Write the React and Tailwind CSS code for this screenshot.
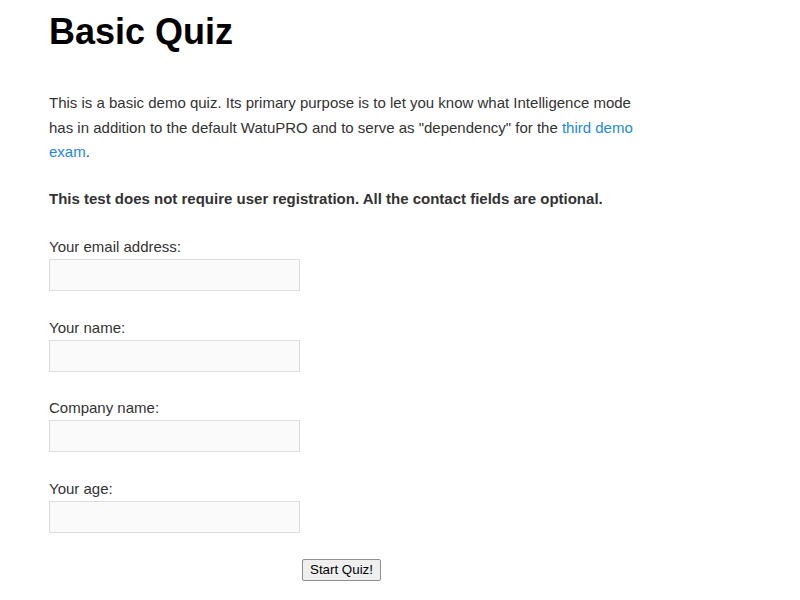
const fields = ["Your email address:", "Your name:", "Company name:", "Your age:"]

const App = () => {
  return (
    <div className="min-h-[600px] bg-white font-['Liberation_Sans',Arial,sans-serif] text-[#333]">
      <div className="w-[602px] ml-[49px] pt-[11px]">
        <h1 className="text-[36px] leading-[41px] font-bold text-black">Basic Quiz</h1>
        <p className="mt-[39px] text-[15px] leading-[24.5px]">
          This is a basic demo quiz. Its primary purpose is to let you know what Intelligence mode has in addition to the default WatuPRO and to serve as "dependency" for the{" "}
          <a href="#" className="text-[#1e88e5]">third demo exam</a>.
        </p>
        <p className="mt-[22.5px] text-[15px] leading-[24px] font-bold">
          This test does not require user registration. All the contact fields are optional.
        </p>
        <div className="mt-[24px] flex flex-col gap-[24.7px]">
          {fields.map((f) => (
            <div key={f}>
              <label className="block text-[15px] leading-[24px]">{f}</label>
              <input type="text" className="block w-[251px] h-[32px] bg-[#fafafa] border border-[#dddddd] outline-none" />
            </div>
          ))}
        </div>
        <div className="mt-[24px] ml-[253px]">
          <button className="h-[22px] px-[7px] text-[13.33px] leading-[18px] text-black bg-[#efefef] border border-[#8f8f8f] rounded-[2px] font-['Liberation_Sans',Arial,sans-serif]">
            Start Quiz!
          </button>
        </div>
      </div>
    </div>
  )
}

export default App
